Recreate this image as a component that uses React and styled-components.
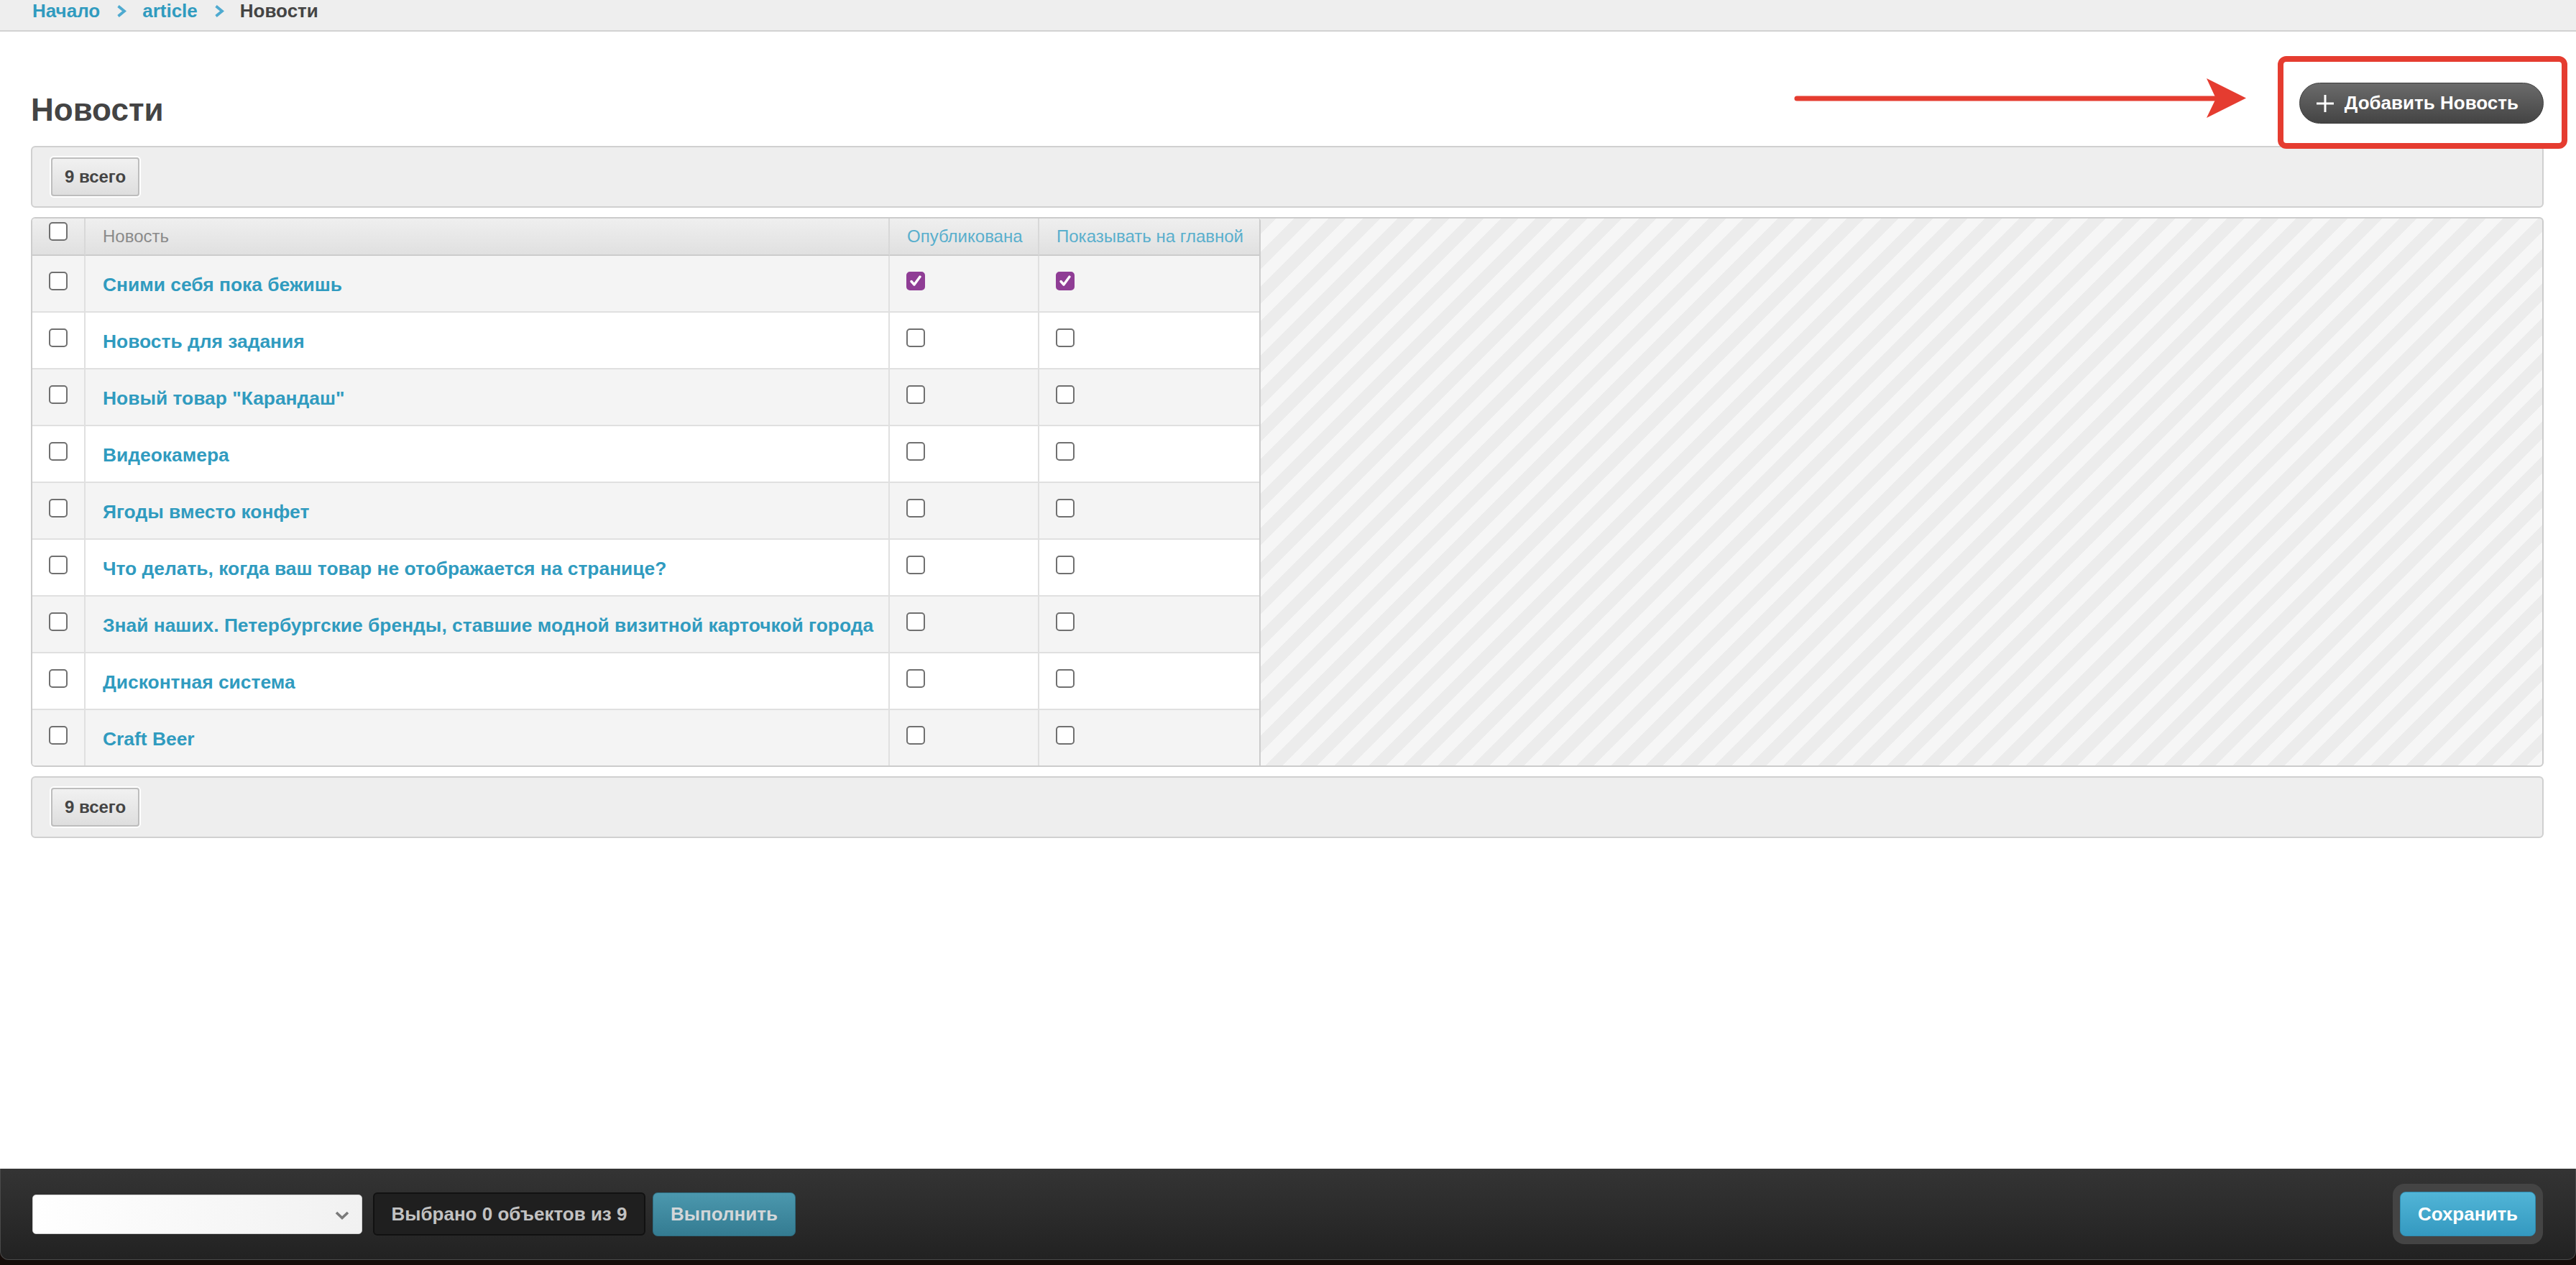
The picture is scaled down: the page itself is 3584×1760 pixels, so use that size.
import React from "react";
import styled, { createGlobalStyle } from "styled-components";

const GlobalStyle = createGlobalStyle`
  html, body {
    margin: 0;
    padding: 0;
  }
  body {
    font-family: "Liberation Sans", Arial, "Noto Sans", sans-serif;
    background: #ffffff;
    color: #444;
  }
  * {
    box-sizing: border-box;
  }
`;

const Page = styled.div`
  display: flex;
  flex-direction: column;
  min-height: 100vh;
  background: #fff;
`;

const Breadcrumbs = styled.nav`
  display: flex;
  align-items: flex-start;
  height: 44px;
  padding: 2px 0 0 45px;
  background: #eeeeee;
  border-bottom: 2px solid #d2d2d2;
  font-size: 26px;
  line-height: 26px;
  font-weight: bold;
`;

const Crumb = styled.a`
  color: ${(p) => (p.$current ? "#444" : "#309bbf")};
  text-decoration: none;
`;

const CrumbSep = styled.span`
  display: inline-flex;
  align-items: center;
  height: 26px;
  margin: 0 22px 0 23px;
`;

const Main = styled.main`
  flex: 1;
  padding: 0 45px 0 43px;
`;

const HeaderRow = styled.div`
  display: flex;
  align-items: flex-end;
  justify-content: space-between;
  margin-top: 71px;
`;

const Title = styled.h1`
  margin: 0;
  font-size: 44px;
  line-height: 52px;
  font-weight: bold;
  color: #444;
`;

const AddWrap = styled.div`
  position: relative;
  margin-bottom: 7px;
`;

const AddButton = styled.a`
  display: flex;
  align-items: center;
  gap: 14px;
  height: 57px;
  padding: 0 34px 0 22px;
  border-radius: 29px;
  border: 1px solid #3c3c3c;
  background: linear-gradient(#6b6b6b, #444444);
  color: #fff;
  font-size: 26px;
  font-weight: bold;
  text-decoration: none;
  white-space: nowrap;
`;

const Highlight = styled.div`
  position: absolute;
  top: -37px;
  right: -33px;
  bottom: -35px;
  left: -30px;
  border: 8px solid #e53c30;
  border-radius: 12px;
  pointer-events: none;
`;

const Arrow = styled.svg`
  position: absolute;
  top: -6px;
  right: calc(100% + 74px);
  pointer-events: none;
`;

const Toolbar = styled.div`
  display: flex;
  align-items: center;
  margin-top: ${(p) => p.$gap || 13}px;
  padding: 14px 26px;
  background: #eeeeee;
  border: 2px solid #d0d0d0;
  border-radius: 6px;
`;

const CountButton = styled.span`
  display: inline-flex;
  align-items: center;
  height: 54px;
  padding: 0 17px;
  border: 2px solid #bdbdbd;
  border-radius: 4px;
  background: linear-gradient(#f1f1f1, #dedede);
  box-shadow: 0 0 0 2px #fff;
  color: #444;
  font-size: 24px;
  font-weight: bold;
`;

const Results = styled.div`
  display: flex;
  margin-top: 13px;
  border: 2px solid #cccccc;
  border-radius: 6px;
  overflow: hidden;
  background: repeating-linear-gradient(
    135deg,
    #f6f6f6 0 17px,
    #ececec 17px 34px
  );
`;

const Grid = styled.div`
  display: grid;
  grid-template-columns: 74px 1119px 208px 306px;
  background: #fff;
  border-right: 2px solid #cccccc;
  border-top-right-radius: 4px;
  overflow: hidden;
`;

const HeadCell = styled.div`
  display: flex;
  align-items: ${(p) => (p.$box ? "flex-start" : "center")};
  height: 52px;
  padding: ${(p) => (p.$box ? "5px 0 0 23px" : "0 24px")};
  background: linear-gradient(#efefef, #e0e0e0);
  border-bottom: 2px solid #cccccc;
  border-right: ${(p) => (p.$last ? "none" : "2px solid #d8d8d8")};
  color: ${(p) => (p.$sortable ? "#59afcd" : "#8a8a8a")};
  font-size: 24px;
  white-space: nowrap;
`;

const Cell = styled.div`
  display: flex;
  align-items: flex-start;
  padding: ${(p) => (p.$box ? "22px 0 0 23px" : "22px 24px 19px")};
  background: ${(p) => (p.$alt ? "#f4f4f4" : "#ffffff")};
  border-bottom: ${(p) => (p.$lastRow ? "none" : "2px solid #e0e0e0")};
  border-right: ${(p) => (p.$last ? "none" : "2px solid #e0e0e0")};
  min-height: ${(p) => (p.$lastRow ? 77 : 79)}px;
`;

const RowLink = styled.a`
  color: #309bbf;
  font-size: 26.4px;
  line-height: 36px;
  font-weight: bold;
  text-decoration: none;
  white-space: nowrap;
`;

const CheckBoxShape = styled.span`
  display: inline-flex;
  align-items: center;
  justify-content: center;
  width: 26px;
  height: 26px;
  border-radius: 5px;
  border: 2px solid ${(p) => (p.$checked ? "#8f3d95" : "#707070")};
  background: ${(p) => (p.$checked ? "#8f3d95" : "#fff")};
  flex-shrink: 0;
`;

const Footer = styled.footer`
  display: flex;
  align-items: center;
  height: 127px;
  padding: 0 45px 0 44px;
  background: linear-gradient(#343434, #222222);
  border: 1px solid #4a4a4a;
  border-top: none;
  border-radius: 0 0 12px 12px;
`;

const FooterZone = styled.div`
  background: #150c09;
  padding-bottom: 7px;
`;

const SelectWrap = styled.div`
  position: relative;
  width: 459px;
  height: 55px;
`;

const ActionSelect = styled.select`
  appearance: none;
  width: 100%;
  height: 100%;
  border: 1px solid #cfcfcf;
  border-radius: 5px;
  background: linear-gradient(100deg, #ffffff, #f1f1f1);
  font-family: inherit;
  font-size: 24px;
`;

const SelectArrow = styled.svg`
  position: absolute;
  right: 18px;
  top: 23px;
  pointer-events: none;
`;

const Counter = styled.span`
  display: inline-flex;
  align-items: center;
  justify-content: center;
  width: 379px;
  height: 60px;
  margin-left: 15px;
  background: #1f1f1f;
  border: 2px solid #111;
  border-radius: 6px;
  color: #c2c2c2;
  font-size: 26px;
  font-weight: bold;
  white-space: nowrap;
`;

const RunButton = styled.button`
  width: 199px;
  height: 61px;
  margin-left: 10px;
  border: 1px solid #2d6c80;
  border-radius: 7px;
  background: linear-gradient(#4b98ae, #347b91);
  color: #d3d7d9;
  font-family: inherit;
  font-size: 26px;
  font-weight: bold;
`;

const Spacer = styled.div`
  flex: 1;
`;

const SaveWrap = styled.div`
  padding: 11px 10px;
  background: #444;
  border-radius: 16px;
`;

const SaveButton = styled.button`
  display: block;
  width: 189px;
  height: 62px;
  border: 1px solid #2e8db2;
  border-radius: 8px;
  background: linear-gradient(#51b5d7, #3499c0);
  color: #fff;
  font-family: inherit;
  font-size: 26px;
  font-weight: bold;
`;

const Chevron = () => (
  <svg width="14" height="17" viewBox="0 0 14 17">
    <polyline
      points="2.5,1.5 11,8.5 2.5,15.5"
      fill="none"
      stroke="#4eaad0"
      strokeWidth="3.8"
    />
  </svg>
);

const Check = ({ checked }) => (
  <CheckBoxShape $checked={checked}>
    {checked && (
      <svg width="18" height="18" viewBox="0 0 18 18">
        <polyline
          points="3,9.5 7,14 15,3"
          fill="none"
          stroke="#fff"
          strokeWidth="3.4"
          strokeLinecap="round"
          strokeLinejoin="round"
        />
      </svg>
    )}
  </CheckBoxShape>
);

const news = [
  { title: "Сними себя пока бежишь", published: true, main: true },
  { title: "Новость для задания" },
  { title: 'Новый товар "Карандаш"' },
  { title: "Видеокамера" },
  { title: "Ягоды вместо конфет" },
  { title: "Что делать, когда ваш товар не отображается на странице?" },
  { title: "Знай наших. Петербургские бренды, ставшие модной визитной карточкой города" },
  { title: "Дисконтная система" },
  { title: "Craft Beer" },
];

export default function App() {
  return (
    <Page>
      <GlobalStyle />
      <Breadcrumbs>
        <Crumb href="#">Начало</Crumb>
        <CrumbSep><Chevron /></CrumbSep>
        <Crumb href="#">article</Crumb>
        <CrumbSep><Chevron /></CrumbSep>
        <Crumb $current>Новости</Crumb>
      </Breadcrumbs>

      <Main>
        <HeaderRow>
          <Title>Новости</Title>
          <AddWrap>
            <Arrow width="629" height="56" viewBox="0 0 629 56">
              <line x1="4" y1="28" x2="585" y2="28" stroke="#e53c30" strokeWidth="7" strokeLinecap="round" />
              <polygon points="574,0 629,27.5 574,55 587,28" fill="#e53c30" />
            </Arrow>
            <AddButton href="#">
              <svg width="26" height="26" viewBox="0 0 26 26">
                <line x1="13" y1="1" x2="13" y2="25" stroke="#fff" strokeWidth="3" />
                <line x1="1" y1="13" x2="25" y2="13" stroke="#fff" strokeWidth="3" />
              </svg>
              Добавить Новость
            </AddButton>
            <Highlight />
          </AddWrap>
        </HeaderRow>

        <Toolbar $gap={24}>
          <CountButton>9 всего</CountButton>
        </Toolbar>

        <Results>
          <Grid>
            <HeadCell $box><Check /></HeadCell>
            <HeadCell>Новость</HeadCell>
            <HeadCell $sortable>Опубликована</HeadCell>
            <HeadCell $sortable $last>Показывать на главной</HeadCell>
            {news.map((n, i) => {
              const alt = i % 2 === 0;
              const lastRow = i === news.length - 1;
              return (
                <React.Fragment key={n.title}>
                  <Cell $box $alt={alt} $lastRow={lastRow}><Check /></Cell>
                  <Cell $alt={alt} $lastRow={lastRow}>
                    <RowLink href="#">{n.title}</RowLink>
                  </Cell>
                  <Cell $box $alt={alt} $lastRow={lastRow}><Check checked={n.published} /></Cell>
                  <Cell $box $alt={alt} $lastRow={lastRow} $last><Check checked={n.main} /></Cell>
                </React.Fragment>
              );
            })}
          </Grid>
        </Results>

        <Toolbar>
          <CountButton>9 всего</CountButton>
        </Toolbar>
      </Main>

      <FooterZone>
        <Footer>
          <SelectWrap>
            <ActionSelect defaultValue="">
              <option value="">{"\u00a0"}</option>
            </ActionSelect>
            <SelectArrow width="20" height="12" viewBox="0 0 20 12">
              <polyline points="2,2 10,9.5 18,2" fill="none" stroke="#7a7a7a" strokeWidth="3.6" />
            </SelectArrow>
          </SelectWrap>
          <Counter>Выбрано 0 объектов из 9</Counter>
          <RunButton>Выполнить</RunButton>
          <Spacer />
          <SaveWrap>
            <SaveButton>Сохранить</SaveButton>
          </SaveWrap>
        </Footer>
      </FooterZone>
    </Page>
  );
}
